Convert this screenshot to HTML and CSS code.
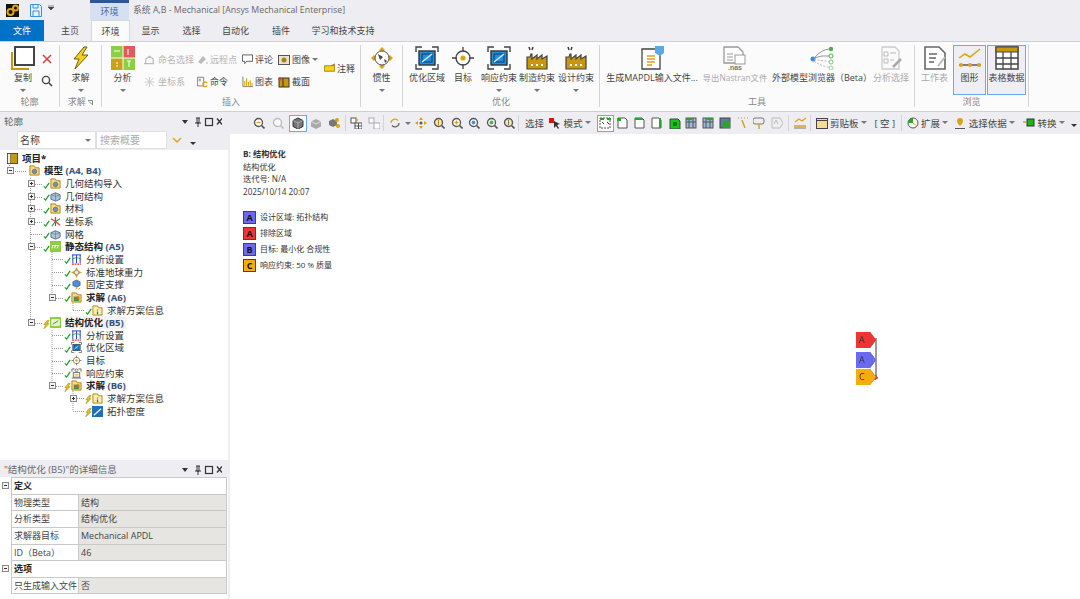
FILE: index.html
```html
<!DOCTYPE html>
<html lang="zh-CN">

<head>
    <meta charset="UTF-8">
    <title>系统 A,B - Mechanical</title>
    <link rel="stylesheet" href="styles.css">
</head>

<body>
    <svg class="defs" width="0" height="0">
        <symbol id="check" viewBox="0 0 8 8"><path d="M1 5l2 2 4-6" fill="none" stroke="#1c9a2a" stroke-width="1.4"/></symbol>
        <symbol id="bolt" viewBox="0 0 8 10"><path d="M5 0L1 5h2L1 10l6-6H5l2-4z" fill="#e8c21c" stroke="#8a7410" stroke-width=".5"/></symbol>
        <symbol id="folder" viewBox="0 0 12 12"><path d="M1 3V1h5l1 2h4v8H1z" fill="#f4d98a" stroke="#a8820f"/><circle cx="6" cy="7" r="2.5" fill="#7b8fa6" stroke="#555" stroke-width=".6"/></symbol>
        <symbol id="solve" viewBox="0 0 12 12"><path d="M1 3V1h5l1 2h4v8H1z" fill="#f4d98a" stroke="#a8820f"/><rect x="3" y="5" width="6" height="5" fill="#3f9b4a"/><rect x="6" y="5" width="3" height="3" fill="#d9642c"/></symbol>
        <symbol id="info" viewBox="0 0 12 12"><path d="M1 3V1h5l1 2h4v8H1z" fill="#fbeeb0" stroke="#a8820f"/><path d="M6 5v1M6 7v3" stroke="#1c6fc4" stroke-width="1.3"/></symbol>
        <symbol id="blocks" viewBox="0 0 12 12"><path d="M1 4l5-2 5 2v5l-5 2-5-2z" fill="#a9c3dc" stroke="#5b6f86"/><path d="M6 2v9M1 4l5 2 5-2" fill="none" stroke="#5b6f86" stroke-width=".6"/></symbol>
        <symbol id="axes" viewBox="0 0 12 12"><path d="M6 6V1M6 6L1 3M6 6l5 4" fill="none" stroke-width="1.4" stroke="#e23b3b"/><path d="M6 6l-4 5M6 6l5-3" fill="none" stroke="#2f9e44" stroke-width="1.2"/><path d="M6 6v5" stroke="#2b6fd0" stroke-width="1.2"/></symbol>
        <symbol id="static" viewBox="0 0 12 12"><rect width="12" height="12" fill="#8ccf3f"/><path d="M2 5h8M3 5L2 8M6 5L5 8M9 5L8 8" stroke="#fff" fill="none"/></symbol>
        <symbol id="topo" viewBox="0 0 12 12"><rect width="12" height="12" fill="#8ccf3f"/><rect x="2" y="3" width="8" height="6" fill="#dff0c5" stroke="#fff"/><path d="M3 8l6-4" stroke="#4c8f1f"/></symbol>
        <symbol id="settings" viewBox="0 0 12 12"><path d="M2 1v9M6 1v9M10 1v9" stroke="#2233bb" fill="none"/><path d="M1 1h10" stroke="#2233bb"/><path d="M1 6q5-4 10 0" stroke="#2aa52a" fill="none"/><path d="M1 11h10" stroke="#e02020" stroke-dasharray="2 1" stroke-width="1.4"/></symbol>
        <symbol id="gravity" viewBox="0 0 12 12"><path d="M6 0l2 4 4 2-4 2-2 4-2-4-4-2 4-2z" fill="#d9a514"/><circle cx="6" cy="6" r="2.4" fill="#eee" stroke="#666" stroke-width=".6"/></symbol>
        <symbol id="fixed" viewBox="0 0 12 12"><path d="M2 3l4-2 4 2v4l-4 2-4-2z" fill="#4a90d9" stroke="#444" stroke-width=".6"/><path d="M5 11l2-1M8 11l2-1" stroke="#d9a514"/></symbol>
        <symbol id="region" viewBox="0 0 24 24"><path d="M1 6V1h6M17 1h6v5M23 18v5h-6M7 23H1v-5" fill="none" stroke="#444" stroke-width="1.4"/><rect x="4" y="5" width="16" height="14" fill="#1f8fe0" stroke="#333" stroke-width="1.4"/><rect x="7" y="8" width="10" height="8" fill="#1f8fe0" stroke="#0c3d66"/><path d="M7 16L17 8" stroke="#d7ecfa" stroke-width="1.4"/></symbol>
        <symbol id="target" viewBox="0 0 24 24"><circle cx="12" cy="12" r="7" fill="#fff" stroke="#444" stroke-width="1.3"/><circle cx="12" cy="12" r="2.6" fill="#d9a514"/><path d="M12 1v5M12 18v5M1 12h5M18 12h5" stroke="#444" stroke-width="1.3"/></symbol>
        <symbol id="factory" viewBox="0 0 24 24"><path d="M2 23V11h3l1-3h1v5l5-4v4l5-4v4l5-3v13z" fill="#c9960f" stroke="#444" stroke-width="1.2"/><path d="M6 19h2M11 19h2M16 19h2" stroke="#fff" stroke-width="2"/><path d="M4 1l1 3M8 1L7 4" stroke="#333" stroke-width="1.4"/></symbol>
        <symbol id="panelbtns" viewBox="0 0 40 10"><path d="M0 3h6L3 7z" fill="#333"/><path d="M14 1h4M15 1v5h2V1M13 6h6M16 6v4" fill="none" stroke="#333"/><rect x="23.500" y="1.500" width="7" height="7" fill="none" stroke="#333" stroke-width="1.200"/><path d="M35 1.500l5 6M40 1.500l-5 6" stroke="#333" stroke-width="1.300"/></symbol>
    </svg>

    <div class="titlebar">
        <div class="app-logo"><svg width="13" height="13" viewBox="0 0 13 13"><circle cx="4.500" cy="8" r="3" fill="none" stroke="#d9a514" stroke-width="2"/><circle cx="9.500" cy="4" r="2.500" fill="none" stroke="#d9a514" stroke-width="2"/></svg></div>
        <svg class="save-icon" width="12" height="13" viewBox="0 0 12 13"><path d="M.5.5h9l2 2v10H.5z" fill="#e6f1fb" stroke="#3d8fdc"/><path d="M3 1v3h5V1M3 12V7h6v5" fill="none" stroke="#3d8fdc"/></svg>
        <svg class="qat-caret" width="6" height="6" viewBox="0 0 6 6"><path d="M0 0h6M0 2h6L3 5z" fill="#444" stroke="#444" stroke-width=".6"/></svg>
        <div class="ctx-tab">环境</div>
        <div class="window-title">系统 A,B - Mechanical [Ansys Mechanical Enterprise]</div>
    </div>

    <div class="tabs">
        <div class="tab file">文件</div>
        <div class="tab t-home">主页</div>
        <div class="tab active">环境</div>
        <div class="tab t-show">显示</div>
        <div class="tab t-sel">选择</div>
        <div class="tab t-auto">自动化</div>
        <div class="tab t-plug">插件</div>
        <div class="tab t-learn">学习和技术支持</div>
    </div>

    <div class="ribbon">
        <div class="group g-outline">
            <div class="group-body">
                <div class="big w-copy">
                    <svg class="big-icon" viewBox="0 0 24 24"><path d="M1 6v17h17" fill="none" stroke="#c9960f" stroke-width="2"/><rect x="4" y="1" width="19" height="18" fill="#fff" stroke="#444" stroke-width="2"/></svg>
                    <span>复制</span><i class="caret"></i>
                </div>
                <div class="mini-col">
                    <svg width="10" height="10" viewBox="0 0 10 10"><path d="M1 1l8 8M9 1L1 9" stroke="#e23b3b" stroke-width="1.5"/></svg>
                    <svg width="12" height="12" viewBox="0 0 12 12"><circle cx="5" cy="5" r="3.600" fill="none" stroke="#444" stroke-width="1.4"/><path d="M8 8l3 3" stroke="#444" stroke-width="1.6"/></svg>
                </div>
            </div>
            <div class="group-label">轮廓</div>
        </div>

        <div class="group g-solve">
            <div class="group-body">
                <div class="big w-solve">
                    <svg class="big-icon" viewBox="0 0 24 24"><path d="M15 1L5 13h5L6 23l13-14h-6l5-8z" fill="#f2d21b" stroke="#6b5a10"/></svg>
                    <span>求解</span><i class="caret"></i>
                </div>
            </div>
            <div class="group-label">求解 <svg width="5" height="5" viewBox="0 0 5 5"><path d="M0 .5h4.500v4.500M1 1.500l3 3" fill="none" stroke="#888"/></svg></div>
        </div>

        <div class="group g-insert">
            <div class="group-body">
                <div class="big w-analysis">
                    <svg class="big-icon" viewBox="0 0 24 24"><rect width="11.500" height="11.500" fill="#8ccf3f"/><rect x="12.500" width="11.500" height="11.500" fill="#e25a5a"/><rect y="12.500" width="11.500" height="11.500" fill="#c9a21a"/><rect x="12.500" y="12.500" width="11.500" height="11.500" fill="#8ccf3f"/><path d="M3 5h6M17 3v6M5 17h2M5 20h2M18 15v6M16 15h4" stroke="#fff"/></svg>
                    <span>分析</span><i class="caret"></i>
                </div>
                <div class="small-col c1">
                    <div class="tool off"><svg width="13" height="12" viewBox="0 0 14 12"><path d="M1 10h11M3 10V5l4-3 4 3v5" fill="none" stroke="#bbb" stroke-width="1.300"/></svg>命名选择</div>
                    <div class="tool off"><svg width="13" height="12" viewBox="0 0 12 12"><path d="M6 1v10M1 6h10M2 2l8 8M10 2l-8 8" stroke="#ccc"/></svg>坐标系</div>
                </div>
                <div class="small-col c2">
                    <div class="tool off"><svg width="11" height="12" viewBox="0 0 11 12"><path d="M1 8l5-6 3 3-5 5z" fill="#bbb"/><circle cx="10" cy="9" r="1" fill="#ccc"/></svg>远程点</div>
                    <div class="tool"><svg width="11" height="12" viewBox="0 0 14 13"><path d="M.5.500h8v11h-8z" fill="#fff" stroke="#666"/><path d="M2 3h3M2 5h3" stroke="#666"/><path d="M13 8a3 3 0 1 0 0 3" fill="none" stroke="#d9a514" stroke-width="1.6"/></svg>命令</div>
                </div>
                <div class="small-col c3">
                    <div class="tool"><svg width="11" height="11" viewBox="0 0 12 11"><path d="M.5.500h11v7H5L3 10V7.500H.5z" fill="#fff" stroke="#555"/></svg>评论</div>
                    <div class="tool"><svg width="11" height="12" viewBox="0 0 12 12"><path d="M1 0v11h11" fill="none" stroke="#777"/><path d="M3 10V5M5 10V2M7 10V6M9 10V4M11 10V7" stroke="#d9a514" stroke-width="1.200"/></svg>图表</div>
                </div>
                <div class="small-col c4">
                    <div class="tool"><svg width="12" height="11" viewBox="0 0 12 11"><rect x=".5" y="1.500" width="11" height="9" fill="#e9e4d2" stroke="#555"/><circle cx="6" cy="6" r="2.500" fill="#a8820f"/></svg>图像<i class="caret inline"></i></div>
                    <div class="tool"><svg width="12" height="12" viewBox="0 0 12 12"><rect x="1" y="2" width="10" height="9" fill="#c9960f" stroke="#333"/><path d="M5 2v9" stroke="#333"/><path d="M0 3h4M2 1v4" stroke="#e23b3b"/></svg>截面</div>
                </div>
                <div class="small-col c5">
                    <div class="tool"><svg width="11" height="11" viewBox="0 0 12 11"><path d="M.5 2.500h8l3-2v8h-11z" fill="#f5d21c" stroke="#a8820f"/><path d="M8 2h3" stroke="#e23b3b"/></svg>注释</div>
                </div>
            </div>
            <div class="group-label">插入</div>
        </div>

        <div class="group g-inertia">
            <div class="group-body">
                <div class="big w-inertia">
                    <svg class="big-icon" viewBox="0 0 24 24"><path d="M12 1l3 3-3 3-3-3zM12 17l3 3-3 3-3-3zM1 12l3-3 3 3-3 3zM17 12l3-3 3 3-3 3z" fill="#d9a514"/><circle cx="12" cy="12" r="7" fill="#fff" stroke="#555"/><path d="M8 8l5 3-3 3zM14 13l3 2-2 2z" fill="#444"/></svg>
                    <span>惯性</span><i class="caret"></i>
                </div>
            </div>
            <div class="group-label">&nbsp;</div>
        </div>

        <div class="group g-optim">
            <div class="group-body">
                <div class="big w-opt1"><svg class="big-icon"><use href="#region"/></svg><span>优化区域</span></div>
                <div class="big w-opt2"><svg class="big-icon"><use href="#target"/></svg><span>目标</span></div>
                <div class="big w-opt3"><svg class="big-icon"><use href="#region"/></svg><span>响应约束</span><i class="caret"></i></div>
                <div class="big w-opt4"><svg class="big-icon"><use href="#factory"/></svg><span>制造约束</span><i class="caret"></i></div>
                <div class="big w-opt5"><svg class="big-icon"><use href="#factory"/></svg><span>设计约束</span><i class="caret"></i></div>
            </div>
            <div class="group-label">优化</div>
        </div>

        <div class="group g-tools">
            <div class="group-body">
                <div class="big w-mapdl">
                    <svg class="big-icon" viewBox="0 0 24 24"><path d="M2 3h13l5 5v15H2z" fill="#fff" stroke="#444" stroke-width="1.300"/><path d="M7 10h8M7 13h8M7 16h8M7 19h5" stroke="#d9a514" stroke-width="1.500"/><path d="M15 0h9v7l-4 3-5-3z" fill="#5aa9e6"/></svg>
                    <span>生成MAPDL输入文件...</span>
                </div>
                <div class="big w-nas off">
                    <svg class="big-icon" viewBox="0 0 24 24"><path d="M1 1h14l5 5v11H1z" fill="#fff" stroke="#999" stroke-width="1.300"/><path d="M4 8h6M4 11h6M4 14h6" stroke="#999"/><rect x="12" y="9" width="10" height="9" fill="#fff" stroke="#999"/><text x="12" y="24" font-size="7" font-weight="700" text-anchor="middle" fill="#777" font-family="Liberation Sans">.nas</text></svg>
                    <span>导出Nastran文件</span>
                </div>
                <div class="big w-ext">
                    <svg class="big-icon" viewBox="0 0 24 24"><circle cx="3" cy="13" r="2.500" fill="#2f8fe8"/><path d="M4 12Q12 3 20 3M4 12q8-3 16-2" fill="none" stroke="#999"/><path d="M4 14q8 0 16 2M4 15q8 6 16 6" fill="none" stroke="#bbb" stroke-dasharray="2 1.500"/><circle cx="21" cy="3" r="2.200" fill="#4cae4c"/><circle cx="21" cy="10" r="2" fill="#fff" stroke="#4cae4c"/><circle cx="21" cy="16" r="2" fill="#fff" stroke="#7cc47c"/><circle cx="21" cy="22" r="2" fill="#fff" stroke="#9ad39a"/></svg>
                    <span>外部模型浏览器（Beta）</span>
                </div>
                <div class="big w-select off">
                    <svg class="big-icon" viewBox="0 0 24 24"><path d="M3 1h13l4 4v18H3z" fill="#fafafa" stroke="#ccc" stroke-width="1.300"/><path d="M5 6h4v4H5zM5 13h4v4H5zM11 7h6M11 14h4" fill="none" stroke="#bbb"/><path d="M14 21l8-8" stroke="#aaa" stroke-width="2.500"/></svg>
                    <span>分析选择</span>
                </div>
            </div>
            <div class="group-label">工具</div>
        </div>

        <div class="group g-browse">
            <div class="group-body">
                <div class="big w-sheet off">
                    <svg class="big-icon" viewBox="0 0 24 24"><path d="M2 1h14l6 6v16H2z" fill="#fff" stroke="#666" stroke-width="1.600"/><path d="M6 8h8M6 12h7M6 16h5" stroke="#666" stroke-width="1.500"/><path d="M15 20l7-9" stroke="#bbb" stroke-width="2"/></svg>
                    <span>工作表</span>
                </div>
                <div class="big w-graph on">
                    <svg class="big-icon" viewBox="0 0 24 24"><path d="M1 12l6-4 5 3 10-8" fill="none" stroke="#d9a514" stroke-width="1.500"/><path d="M1 19h22" stroke="#444" stroke-width="1.300"/><circle cx="3" cy="19" r="2" fill="#d9a514"/><circle cx="12" cy="19" r="2" fill="#d9a514"/><circle cx="21" cy="19" r="2" fill="#d9a514"/></svg>
                    <span>图形</span>
                </div>
                <div class="big w-table on">
                    <svg class="big-icon" viewBox="0 0 24 24"><rect x="1" y="1" width="22" height="22" fill="#fff" stroke="#444" stroke-width="1.500"/><rect x="1" y="1" width="22" height="5" fill="#c9960f" stroke="#444"/><path d="M8 6v17M16 6v17M1 12h22M1 18h22" stroke="#444" stroke-width="1.300"/></svg>
                    <span>表格数据</span>
                </div>
            </div>
            <div class="group-label">浏览</div>
        </div>
    </div>

    <div class="workspace">
        <div class="side">
            <div class="panel-head">
                <span>轮廓</span><span class="dots"></span>
                <svg width="40" height="10"><use href="#panelbtns"/></svg>
            </div>
            <div class="search-row">
                <span class="grip"></span>
                <div class="combo">名称<i class="caret"></i></div>
                <div class="search">搜索概要</div>
                <svg width="10" height="6" viewBox="0 0 10 6"><path d="M1 1l4 4 4-4" fill="none" stroke="#d9a514" stroke-width="1.300"/></svg>
                <i class="caret end"></i>
            </div>

            <div class="tree">
                <svg class="tree-lines" width="228" height="290" viewBox="0 150 228 290">
                    <path d="M9.500 163V171M13 171.500H27M30.500 178V323M52 252V298M52 330V386M73 303V310M73 391V411M35 184.500H43M35 197.500H43M35 209.500H43M35 222.500H43M31 234.500H43M35 247.500H43M35 323.500H43M52 259.500H64M52 272.500H64M52 285.500H64M56 298.500H64M52 335.500H64M52 348.500H64M52 361.500H64M52 373.500H64M56 386.500H64M73 310.500H85M77 398.500H85M73 411.500H85" fill="none" stroke="#999" stroke-dasharray="1 1"/>
                </svg>
                <div class="node root"><svg class="ic" viewBox="0 0 12 12"><rect x=".5" y=".5" width="11" height="11" fill="#c9960f" stroke="#444"/><path d="M3.500 1v10" stroke="#444"/><rect x="1" y="1" width="2.500" height="10" fill="#eee"/></svg><span class="tx b">项目*</span></div>
                <div class="node lv1"><i class="exp minus"></i><i class="st"></i><svg class="ic"><use href="#folder"/></svg><span class="tx b">模型 <em>(A4, B4)</em></span></div>
                <div class="node lv2"><i class="exp plus"></i><svg class="st"><use href="#check"/></svg><svg class="ic"><use href="#folder"/></svg><span class="tx">几何结构导入</span></div>
                <div class="node lv2"><i class="exp plus"></i><svg class="st"><use href="#check"/></svg><svg class="ic"><use href="#blocks"/></svg><span class="tx">几何结构</span></div>
                <div class="node lv2"><i class="exp plus"></i><svg class="st"><use href="#check"/></svg><svg class="ic"><use href="#folder"/></svg><span class="tx">材料</span></div>
                <div class="node lv2"><i class="exp plus"></i><svg class="st"><use href="#check"/></svg><svg class="ic"><use href="#axes"/></svg><span class="tx">坐标系</span></div>
                <div class="node lv2"><i class="exp"></i><svg class="st"><use href="#check"/></svg><svg class="ic"><use href="#blocks"/></svg><span class="tx">网格</span></div>
                <div class="node lv2"><i class="exp minus"></i><svg class="st"><use href="#check"/></svg><svg class="ic"><use href="#static"/></svg><span class="tx b">静态结构 <em>(A5)</em></span></div>
                <div class="node lv3"><i class="exp"></i><svg class="st"><use href="#check"/></svg><svg class="ic"><use href="#settings"/></svg><span class="tx">分析设置</span></div>
                <div class="node lv3"><i class="exp"></i><svg class="st"><use href="#check"/></svg><svg class="ic"><use href="#gravity"/></svg><span class="tx">标准地球重力</span></div>
                <div class="node lv3"><i class="exp"></i><svg class="st"><use href="#check"/></svg><svg class="ic"><use href="#fixed"/></svg><span class="tx">固定支撑</span></div>
                <div class="node lv3"><i class="exp minus"></i><svg class="st"><use href="#check"/></svg><svg class="ic"><use href="#solve"/></svg><span class="tx b">求解 <em>(A6)</em></span></div>
                <div class="node lv4"><i class="exp"></i><svg class="st"><use href="#check"/></svg><svg class="ic"><use href="#info"/></svg><span class="tx">求解方案信息</span></div>
                <div class="node lv2"><i class="exp minus"></i><svg class="st"><use href="#bolt"/></svg><svg class="ic"><use href="#topo"/></svg><span class="tx b sel">结构优化 <em>(B5)</em></span></div>
                <div class="node lv3"><i class="exp"></i><svg class="st"><use href="#check"/></svg><svg class="ic"><use href="#settings"/></svg><span class="tx">分析设置</span></div>
                <div class="node lv3"><i class="exp"></i><svg class="st"><use href="#check"/></svg><svg class="ic"><use href="#region"/></svg><span class="tx">优化区域</span></div>
                <div class="node lv3"><i class="exp"></i><svg class="st"><use href="#check"/></svg><svg class="ic"><use href="#target"/></svg><span class="tx">目标</span></div>
                <div class="node lv3"><i class="exp"></i><svg class="st"><use href="#check"/></svg><svg class="ic" viewBox="0 0 12 12"><path d="M1 4V1h3M8 1h3v3M1 11h10" fill="none" stroke="#666"/><circle cx="6" cy="2.500" r="1.500" fill="none" stroke="#666"/><rect x="2.500" y="5" width="7" height="5" fill="#fff" stroke="#666"/><path d="M4 7.500h4" stroke="#d9a514" stroke-width="1.300"/></svg><span class="tx">响应约束</span></div>
                <div class="node lv3"><i class="exp minus"></i><svg class="st"><use href="#bolt"/></svg><svg class="ic"><use href="#solve"/></svg><span class="tx b">求解 <em>(B6)</em></span></div>
                <div class="node lv4"><i class="exp plus"></i><svg class="st"><use href="#bolt"/></svg><svg class="ic"><use href="#info"/></svg><span class="tx">求解方案信息</span></div>
                <div class="node lv4"><i class="exp"></i><svg class="st"><use href="#bolt"/></svg><svg class="ic" viewBox="0 0 12 12"><rect width="12" height="12" fill="#1f6fb5"/><path d="M2 10L10 3" stroke="#e8f2fb" stroke-width="1.500"/></svg><span class="tx">拓扑密度</span></div>
            </div>

            <div class="panel-head details-head">
                <span>"结构优化 (B5)"的详细信息</span><span class="dots"></span>
                <svg width="40" height="10"><use href="#panelbtns"/></svg>
            </div>
            <div class="details">
                <div class="d-section"><i class="exp minus"></i><b>定义</b></div>
                <div class="d-row"><span class="d-key">物理类型</span><span class="d-val">结构</span></div>
                <div class="d-row"><span class="d-key">分析类型</span><span class="d-val">结构优化</span></div>
                <div class="d-row"><span class="d-key">求解器目标</span><span class="d-val">Mechanical APDL</span></div>
                <div class="d-row"><span class="d-key">ID（Beta）</span><span class="d-val">46</span></div>
                <div class="d-section"><i class="exp minus"></i><b>选项</b></div>
                <div class="d-row"><span class="d-key">只生成输入文件</span><span class="d-val">否</span></div>
            </div>
        </div>

        <div class="main">
            <div class="toolbar">
                <span class="grip"></span>
                <span class="tb ml4"><svg><circle cx="5.500" cy="5.500" r="4" fill="#fff" stroke="#555" stroke-width="1.300"/><path d="M8.500 8.500l3 3" stroke="#555" stroke-width="1.600"/><path d="M3.500 5.500h4" stroke="#d9a514" stroke-width="1.300"/></svg></span>
                <span class="tb dim ml2"><svg><circle cx="5.500" cy="5.500" r="4" fill="#fff" stroke="#aaa" stroke-width="1.300"/><path d="M8.500 8.500l3 3" stroke="#aaa" stroke-width="1.600"/></svg></span>
                <span class="tb cur ml2"><svg><path d="M6 1l5 2.500v6L6 12 1 9.500v-6z" fill="#777" stroke="#333"/><path d="M1 3.500L6 6l5-2.500M6 6v6" fill="none" stroke="#ccc" stroke-width=".6"/></svg></span>
                <span class="tb ml1"><svg><path d="M6 2l5 2.500v5L6 12 1 9.500v-5z" fill="#aaa"/><path d="M1 4.500L6 7l5-2.500" fill="none" stroke="#ddd"/></svg></span>
                <span class="tb"><svg><path d="M5 2l4 2v4L5 10 1 8V4z" fill="#777"/><circle cx="9" cy="3" r="2" fill="#d9a514"/><circle cx="10" cy="9" r="2" fill="#d9a514"/></svg></span>
                <span class="sep ml2"></span>
                <span class="tb ml2"><svg><rect x="1" y="1" width="5" height="5" fill="#fff" stroke="#555"/><rect x="5" y="6" width="7" height="6" fill="#fff" stroke="#555"/><path d="M8.500 6v6M5 9h7" stroke="#555"/><circle cx="7" cy="3" r="1" fill="#d9a514"/></svg></span>
                <span class="tb"><svg><rect x="1" y="1" width="5" height="5" fill="#fff" stroke="#aaa"/><rect x="6" y="6" width="6" height="6" fill="#fff" stroke="#aaa"/></svg></span>
                <span class="sep"></span>
                <span class="tb ml3"><svg><path d="M2 6a4 4 0 0 1 7-2.500" fill="none" stroke="#d9a514" stroke-width="1.300"/><path d="M10 6a4 4 0 0 1-7 2.500" fill="none" stroke="#666" stroke-width="1.300"/></svg></span>
                <i class="caret tb-caret"></i>
                <span class="tb ml1"><svg><path d="M6 0l2 3H4zM6 12L4 9h4zM0 6l3-2v4zM12 6L9 8V4z" fill="#d9a514"/><circle cx="6" cy="6" r="1.500" fill="#555"/></svg></span>
                <span class="tb ml1"><svg><circle cx="5.500" cy="5.500" r="4" fill="#f4e7b3" stroke="#555" stroke-width="1.300"/><path d="M8.500 8.500l3 3" stroke="#555" stroke-width="1.600"/><path d="M5.500 3v5" stroke="#b8860b"/></svg></span>
                <span class="tb"><svg><circle cx="5.500" cy="5.500" r="4" fill="#fff" stroke="#555" stroke-width="1.300"/><path d="M8.500 8.500l3 3" stroke="#555" stroke-width="1.600"/><path d="M3.500 5.500h4M5.500 3.500v4" stroke="#d9a514" stroke-width="1.300"/></svg></span>
                <span class="tb"><svg><circle cx="5.500" cy="5.500" r="4" fill="#fff" stroke="#555" stroke-width="1.300"/><path d="M8.500 8.500l3 3" stroke="#555" stroke-width="1.600"/><circle cx="5.500" cy="5.500" r="2" fill="#5a8fc9"/></svg></span>
                <span class="tb"><svg><circle cx="5.500" cy="5.500" r="4" fill="#fff" stroke="#555" stroke-width="1.300"/><path d="M8.500 8.500l3 3" stroke="#555" stroke-width="1.600"/><circle cx="5.500" cy="5.500" r="2" fill="#4caf50"/></svg></span>
                <span class="tb"><svg><circle cx="5.500" cy="5.500" r="4" fill="#f4e7b3" stroke="#555" stroke-width="1.300"/><path d="M8.500 8.500l3 3" stroke="#555" stroke-width="1.600"/><path d="M5.500 3v5" stroke="#777"/></svg></span>
                <span class="sep"></span>
                <span class="tb-text ml6">选择</span>
                <span class="tb ml2"><svg><rect x="0" y="1" width="5" height="5" fill="#e01010"/><path d="M5 4l6 3-3 1 2 3-1 1-2-3-2 2z" fill="#333"/></svg></span>
                <span class="tb-text">模式<i class="caret inline"></i></span>
                <span class="tb cur ml6"><svg><rect x="1" y="1" width="10" height="10" fill="#fff" stroke="#555" stroke-dasharray="2 1"/><path d="M1 1h4v2H1zM8 1h4v2H8z" fill="#2aa52a"/><path d="M3 5l2 2M8 5l2 2" stroke="#333"/></svg></span>
                <span class="tb n"><svg><path d="M2 1h7l2 2v8H2z" fill="#fff" stroke="#555"/><path d="M1 1h4v3H1z" fill="#2aa52a"/></svg></span>
                <span class="tb n"><svg><path d="M2 1h7l2 2v8H2z" fill="#fff" stroke="#555"/><path d="M2 1h8v2H2z" fill="#2aa52a"/></svg></span>
                <span class="tb n"><svg><path d="M2 1h7l2 2v8H2z" fill="#fff" stroke="#555"/><path d="M9 1h2v10H9z" fill="#2aa52a"/></svg></span>
                <span class="tb n ml2"><svg><path d="M1 2h8l2 2v8H1z" fill="#19c419" stroke="#444"/><rect x="4" y="5" width="4" height="4" fill="#0f7d0f"/></svg></span>
                <span class="tb n"><svg><rect x="1" y="1" width="10" height="10" fill="#9cb9d9" stroke="#555"/><path d="M4 1v10M8 1v10M1 5h10" stroke="#555"/><path d="M1 1h6v2H1z" fill="#2aa52a"/></svg></span>
                <span class="tb n"><svg><rect x="1" y="1" width="10" height="10" fill="#9cb9d9" stroke="#555"/><path d="M4 1v10M8 1v10M1 5h10" stroke="#555"/><path d="M5 1h6v2H5z" fill="#2aa52a"/></svg></span>
                <span class="tb n"><svg><rect x="1" y="1" width="10" height="10" fill="#5d7f95" stroke="#444"/><rect x="4" y="4" width="7" height="7" fill="#2aa52a"/></svg></span>
                <span class="tb n ml1"><svg><path d="M1 1h1M4 1h1M7 1h1M10 1h1" stroke="#999"/><path d="M5 3l3 8" stroke="#d9a514" stroke-width="1.500"/></svg></span>
                <span class="tb n"><svg><rect x="0" y="1" width="11" height="6" rx="2" fill="#eee" stroke="#777"/><path d="M6 7v5" stroke="#d9a514" stroke-width="1.500"/></svg></span>
                <span class="tb n dim ml1"><svg><path d="M1 1h8l3 5-3 5H1z" fill="#eee" stroke="#aaa"/><path d="M3 7l2-4 2 4" fill="none" stroke="#aaa"/></svg></span>
                <span class="sep ml2"></span>
                <span class="tb n ml3"><svg><path d="M1 5l4-3 3 2 4-3" fill="none" stroke="#d9a514" stroke-width="1.200"/><path d="M0 9h12" stroke="#d9a514" stroke-width="1.500"/><path d="M0 11h12" stroke="#777"/></svg></span>
                <span class="sep ml2"></span>
                <span class="tb n ml2"><svg><rect x=".5" y="1.500" width="11" height="10" fill="#f3dc9a" stroke="#444"/><path d="M.5 3.500h11" stroke="#444"/></svg></span>
                <span class="tb-text">剪贴板<i class="caret inline"></i></span>
                <span class="tb-text ml8">[ 空 ]</span>
                <span class="sep ml6"></span>
                <span class="tb n ml2"><svg><circle cx="6" cy="6" r="5" fill="#fff" stroke="#555"/><path d="M1 6a5 5 0 0 1 5-5v5z" fill="#2aa52a"/><path d="M6 6l4 3" stroke="#d9a514"/></svg></span>
                <span class="tb-text">扩展<i class="caret inline"></i></span>
                <span class="tb n ml4"><svg><path d="M6 1a3 3 0 0 1 3 3c0 2-3 5-3 5s-3-3-3-5a3 3 0 0 1 3-3z" fill="#d9a514"/><path d="M1 11.500h10" stroke="#555"/></svg></span>
                <span class="tb-text">选择依据<i class="caret inline"></i></span>
                <span class="tb n ml6"><svg><rect x="4" y="2" width="7" height="7" fill="#19b519" stroke="#333"/><path d="M0 5h3" stroke="#d9a514" stroke-width="1.500"/></svg></span>
                <span class="tb-text">转换<i class="caret inline"></i></span>
                <i class="tb-end"></i>
            </div>

            <div class="canvas">
                <div class="info">
                    <div class="info-title">B: 结构优化</div>
                    <div>结构优化</div>
                    <div>迭代号: N/A</div>
                    <div>2025/10/14 20:07</div>
                </div>
                <div class="legend">
                    <div class="legend-row"><span class="swatch blue">A</span>设计区域: 拓扑结构</div>
                    <div class="legend-row"><span class="swatch red">A</span>排除区域</div>
                    <div class="legend-row"><span class="swatch blue">B</span>目标: 最小化 合规性</div>
                    <div class="legend-row"><span class="swatch amber">C</span>响应约束: 50 % 质量</div>
                </div>
                <div class="flags">
                    <svg class="flag-line" width="24" height="54" viewBox="0 0 24 54"><path d="M20 6v40" stroke="#aaa" stroke-width="1.200"/><path d="M17 45l3-2 2 3-3 2z" fill="#d03a5a"/></svg>
                    <div class="flag red">A</div>
                    <div class="flag blue">A</div>
                    <div class="flag amber">C</div>
                </div>
            </div>
        </div>
    </div>
</body>

</html>
```

FILE: styles.css
```css
* {
    box-sizing: border-box;
}

html, body {
    margin: 0;
    height: 599px;
    overflow: hidden;
}

body {
    width: 1080px;
    background: #eeeef2;
    color: #444;
    font: 9px/13px "Open Sans", "Noto Sans CJK SC", sans-serif;
    display: flex;
    flex-direction: column;
}

svg {
    flex: none;
}

.defs {
    position: absolute;
}

i {
    font-style: normal;
}

.ml1 { margin-left: 1px; }
.ml2 { margin-left: 2px; }
.ml3 { margin-left: 3px; }
.ml4 { margin-left: 4px; }
.ml6 { margin-left: 6px; }
.ml8 { margin-left: 8px; }

/* title bar */
.titlebar {
    height: 20px;
    display: flex;
    align-items: center;
}

.app-logo {
    width: 13px;
    height: 13px;
    margin-left: 6px;
    background: #111;
    display: flex;
}

.save-icon {
    margin-left: 11px;
}

.qat-caret {
    margin-left: 6px;
    margin-top: -4px;
}

.ctx-tab {
    margin-left: 36px;
    width: 39px;
    height: 20px;
    border-top: 3px solid #2b5797;
    background: #d5e1f2;
    color: #4a6a94;
    text-align: center;
    line-height: 18px;
}

.window-title {
    margin-left: 4px;
    color: #666;
    font-size: 8.8px;
}

/* tabs */
.tabs {
    height: 21px;
    display: flex;
}

.tab {
    width: 40px;
    text-align: center;
    line-height: 22px;
}

.tab.file {
    width: 44px;
    background: #0072c6;
    color: #fff;
}

.t-home {
    width: 47px;
    padding-left: 5px;
}

.tab.active {
    width: 39px;
    background: #fbfbfc;
    border-top: 1px solid #d8d8dc;
    border-left: 1px solid #d8d8dc;
    border-right: 1px solid #d8d8dc;
    line-height: 21px;
}

.t-show, .t-sel {
    width: 41px;
}

.t-auto {
    width: 47px;
}

.t-plug {
    width: 44px;
}

.t-learn {
    width: 80px;
}

/* ribbon */
.ribbon {
    height: 71px;
    display: flex;
    background: #fbfbfc;
    border-top: 1px solid #d0d0d4;
    border-bottom: 1px solid #d0d0d4;
}

.group {
    display: flex;
    flex-direction: column;
    border-right: 1px solid #d4d4d8;
    margin: 3px 0 4px;
    flex: none;
}

.group-body {
    height: 50px;
    display: flex;
}

.group-label {
    height: 13px;
    text-align: center;
    color: #888;
    white-space: nowrap;
}

.g-outline { width: 60px; }
.g-solve { width: 42px; }
.g-insert { width: 259px; }
.g-inertia { width: 42px; }
.g-optim { width: 197px; }
.g-tools { width: 315px; }
.g-browse { width: 114px; }

.big {
    display: flex;
    flex-direction: column;
    align-items: center;
    flex: none;
    white-space: nowrap;
    height: 50px;
    padding-top: 1px;
}

.big-icon {
    width: 24px;
    height: 24px;
    margin-bottom: 1px;
}

.big.off {
    color: #aaa;
}

.big.on {
    background: #eeeef4;
    border: 1px solid #66aaf0;
    padding-top: 0;
}

.caret {
    display: block;
    width: 0;
    height: 0;
    margin-top: 5px;
    flex: none;
    border-left: 3px solid transparent;
    border-right: 3px solid transparent;
    border-top: 3px solid #777;
}

.caret.inline {
    display: inline-block;
    margin: 0 0 2px 2px;
    vertical-align: middle;
}

.tool .caret.inline {
    margin: 0;
}

.w-copy { width: 40px; margin-left: 3px; }
.w-solve { width: 41px; }
.w-analysis { width: 41px; }
.w-inertia { width: 41px; }
.w-opt1 { width: 48px; }
.w-opt2 { width: 24px; }
.w-opt3 { width: 48px; }
.w-opt4 { width: 28px; }
.w-opt5 { width: 50px; }
.w-mapdl { width: 104px; }
.w-nas { width: 62px; font-size: 8.4px; }
.w-ext { width: 104px; margin-left: 4px; }
.w-select { width: 34px; }
.w-sheet { width: 37px; margin-left: 1px; }
.w-graph { width: 33px; }
.w-table { width: 39px; margin-left: 1px; }

.mini-col {
    width: 8px;
    padding-top: 9px;
    display: flex;
    flex-direction: column;
    gap: 11px;
    align-items: center;
}

.small-col {
    display: flex;
    flex-direction: column;
    gap: 9px;
    padding-top: 8px;
    flex: none;
}

.c1 { width: 54px; }
.c2 { width: 45px; }
.c3 { width: 36px; }
.c4 { width: 46px; }
.c5 { padding-top: 17px; }

.tool {
    display: flex;
    align-items: center;
    gap: 2px;
    height: 13px;
    white-space: nowrap;
}

.tool.off {
    color: #b4b4b4;
}

/* left side */
.workspace {
    flex: 1;
    display: flex;
    min-height: 0;
}

.side {
    width: 229px;
    display: flex;
    flex-direction: column;
    background: #fff;
    border-right: 1px solid #eeeef2;
    flex: none;
}

.panel-head {
    height: 17px;
    background: #eeeef2;
    display: flex;
    align-items: center;
    padding: 2px 6px 0 4px;
    gap: 4px;
    color: #666;
    white-space: nowrap;
    font-size: 9.5px;
    flex: none;
}

.dots {
    flex: 1;
    height: 5px;
    background-image: radial-gradient(#b4b4b8 .6px, transparent .7px);
    background-size: 2px 2px;
    margin-right: 4px;
}

.search-row {
    height: 21px;
    background: #eeeef2;
    display: flex;
    align-items: center;
    padding: 1px 0 0 8px;
    flex: none;
}

.grip {
    width: 5px;
    height: 14px;
    background-image: radial-gradient(#b4b4b8 .6px, transparent .7px);
    background-size: 2px 2px;
    flex: none;
}

.combo {
    width: 79px;
    height: 18px;
    margin-left: 4px;
    padding-left: 2px;
    background: #fff;
    border: 1px solid #e0e0e4;
    display: flex;
    justify-content: space-between;
    align-items: center;
    font-size: 10px;
}

.combo .caret {
    margin: 0 4px 0 0;
}

.search {
    width: 71px;
    height: 18px;
    margin-right: 5px;
    padding-left: 3px;
    background: #fff;
    border: 1px solid #e0e0e4;
    color: #aaa;
    line-height: 16px;
    font-size: 10px;
}

.caret.end {
    margin: 6px 0 0 8px;
    border-top-color: #333;
}

.tree {
    height: 310px;
    padding-top: 2px;
    position: relative;
    background: #fff;
    flex: none;
}

.tree-lines {
    position: absolute;
    left: 0;
    top: 0;
}

.node {
    height: 12.65px;
    display: flex;
    align-items: center;
    position: relative;
    white-space: nowrap;
    font-size: 9.5px;
    color: #333;
}

.root { padding-left: 7px; }
.lv1 { padding-left: 7px; }
.lv2 { padding-left: 28px; }
.lv3 { padding-left: 49px; }
.lv4 { padding-left: 70px; }

.exp {
    width: 7px;
    height: 7px;
    margin-right: 8px;
    flex: none;
    position: relative;
}

.exp.plus, .exp.minus {
    background: #f4f4f4;
    border: 1px solid #888;
}

.exp.plus::before, .exp.minus::before {
    content: "";
    position: absolute;
    left: 1px;
    right: 1px;
    top: 2px;
    height: 1px;
    background: #333;
}

.exp.plus::after {
    content: "";
    position: absolute;
    top: 1px;
    bottom: 1px;
    left: 2px;
    width: 1px;
    background: #333;
}

.st {
    width: 7px;
    height: 9px;
    margin-top: 3px;
    flex: none;
}

.ic {
    width: 11px;
    height: 11px;
    flex: none;
}

.tx {
    margin-left: 4px;
}

.tx.b {
    font-weight: 700;
    color: #222;
}

.tx em {
    font-style: normal;
    color: #36517a;
}

.tx.sel {
    background: #f3f3f5;
    padding-right: 2px;
}

.details {
    flex: 1;
    background: #fff;
    padding-right: 1px;
}

.d-section {
    height: 16.7px;
    display: flex;
    align-items: center;
    padding-left: 2px;
    color: #222;
}

.d-section .exp {
    margin-right: 2px;
}

.d-section b {
    flex: 1;
    height: 100%;
    padding-left: 2px;
    border: 1px solid #c9c9c9;
    border-bottom: 0;
    line-height: 15px;
}

.d-row {
    height: 16.7px;
    display: flex;
    margin-left: 11px;
    border: 1px solid #c9c9c9;
    border-bottom: 0;
    line-height: 15px;
}

.d-row:last-child {
    border-bottom: 1px solid #c9c9c9;
}

.d-key {
    width: 67px;
    padding-left: 2px;
    border-right: 1px solid #c9c9c9;
    white-space: nowrap;
}

.d-val {
    flex: 1;
    padding-left: 2px;
    background: #e6e5e1;
}

/* right side */
.main {
    flex: 1;
    display: flex;
    flex-direction: column;
    padding-left: 1px;
    min-width: 0;
}

.toolbar {
    height: 22px;
    display: flex;
    align-items: center;
    padding-left: 11px;
    white-space: nowrap;
    font-size: 9.5px;
}

.tb {
    width: 17.5px;
    height: 17px;
    display: flex;
    align-items: center;
    justify-content: center;
    flex: none;
}

.tb.n {
    width: 16.75px;
}

.tb svg {
    width: 12px;
    height: 12px;
}

.tb.cur {
    background: #fff;
    border: 1px solid #66aaf0;
}

.tb.dim {
    opacity: .75;
}

.sep {
    width: 1px;
    height: 16px;
    background: #d4d4d8;
    flex: none;
}

.tb-text {
    flex: none;
}

.toolbar .caret {
    margin-top: 0;
}

.tb-caret {
    margin-left: 1px;
}

.tb-end {
    display: block;
    width: 0;
    height: 0;
    margin: 5px 0 0 6px;
    flex: none;
    border-left: 3px solid transparent;
    border-right: 3px solid transparent;
    border-top: 3px solid #333;
}

.canvas {
    flex: 1;
    background: #fff;
    position: relative;
    padding: 14px 0 0 13px;
    font-size: 8px;
    line-height: 12.5px;
    color: #333;
}

.info {
    font-size: 8.2px;
}

.info-title {
    font-weight: 700;
}

.legend {
    margin-top: 13px;
    display: flex;
    flex-direction: column;
    gap: 3px;
}

.legend-row {
    display: flex;
    align-items: center;
    gap: 4px;
    height: 13px;
}

.swatch {
    width: 13px;
    height: 13px;
    border: 1px solid #444;
    text-align: center;
    font-size: 9px;
    line-height: 11px;
    font-weight: 700;
    color: #111;
}

.red { background: #f03434; }
.blue { background: #6a6af0; }
.amber { background: #f5ac0c; }

.flags {
    position: absolute;
    left: 626px;
    top: 198px;
    width: 24px;
    display: flex;
    flex-direction: column;
    gap: 4px;
    filter: drop-shadow(0 0 .5px #333);
}

.flag-line {
    position: absolute;
    left: 0;
    top: 0;
}

.flag {
    width: 20px;
    height: 16px;
    padding-left: 3px;
    font-size: 9px;
    line-height: 16px;
    position: relative;
    color: #333;
    clip-path: polygon(0 0, 70% 0, 100% 50%, 70% 100%, 0 100%);
}

.flag.amber {
    margin-top: -3px;
}
```
